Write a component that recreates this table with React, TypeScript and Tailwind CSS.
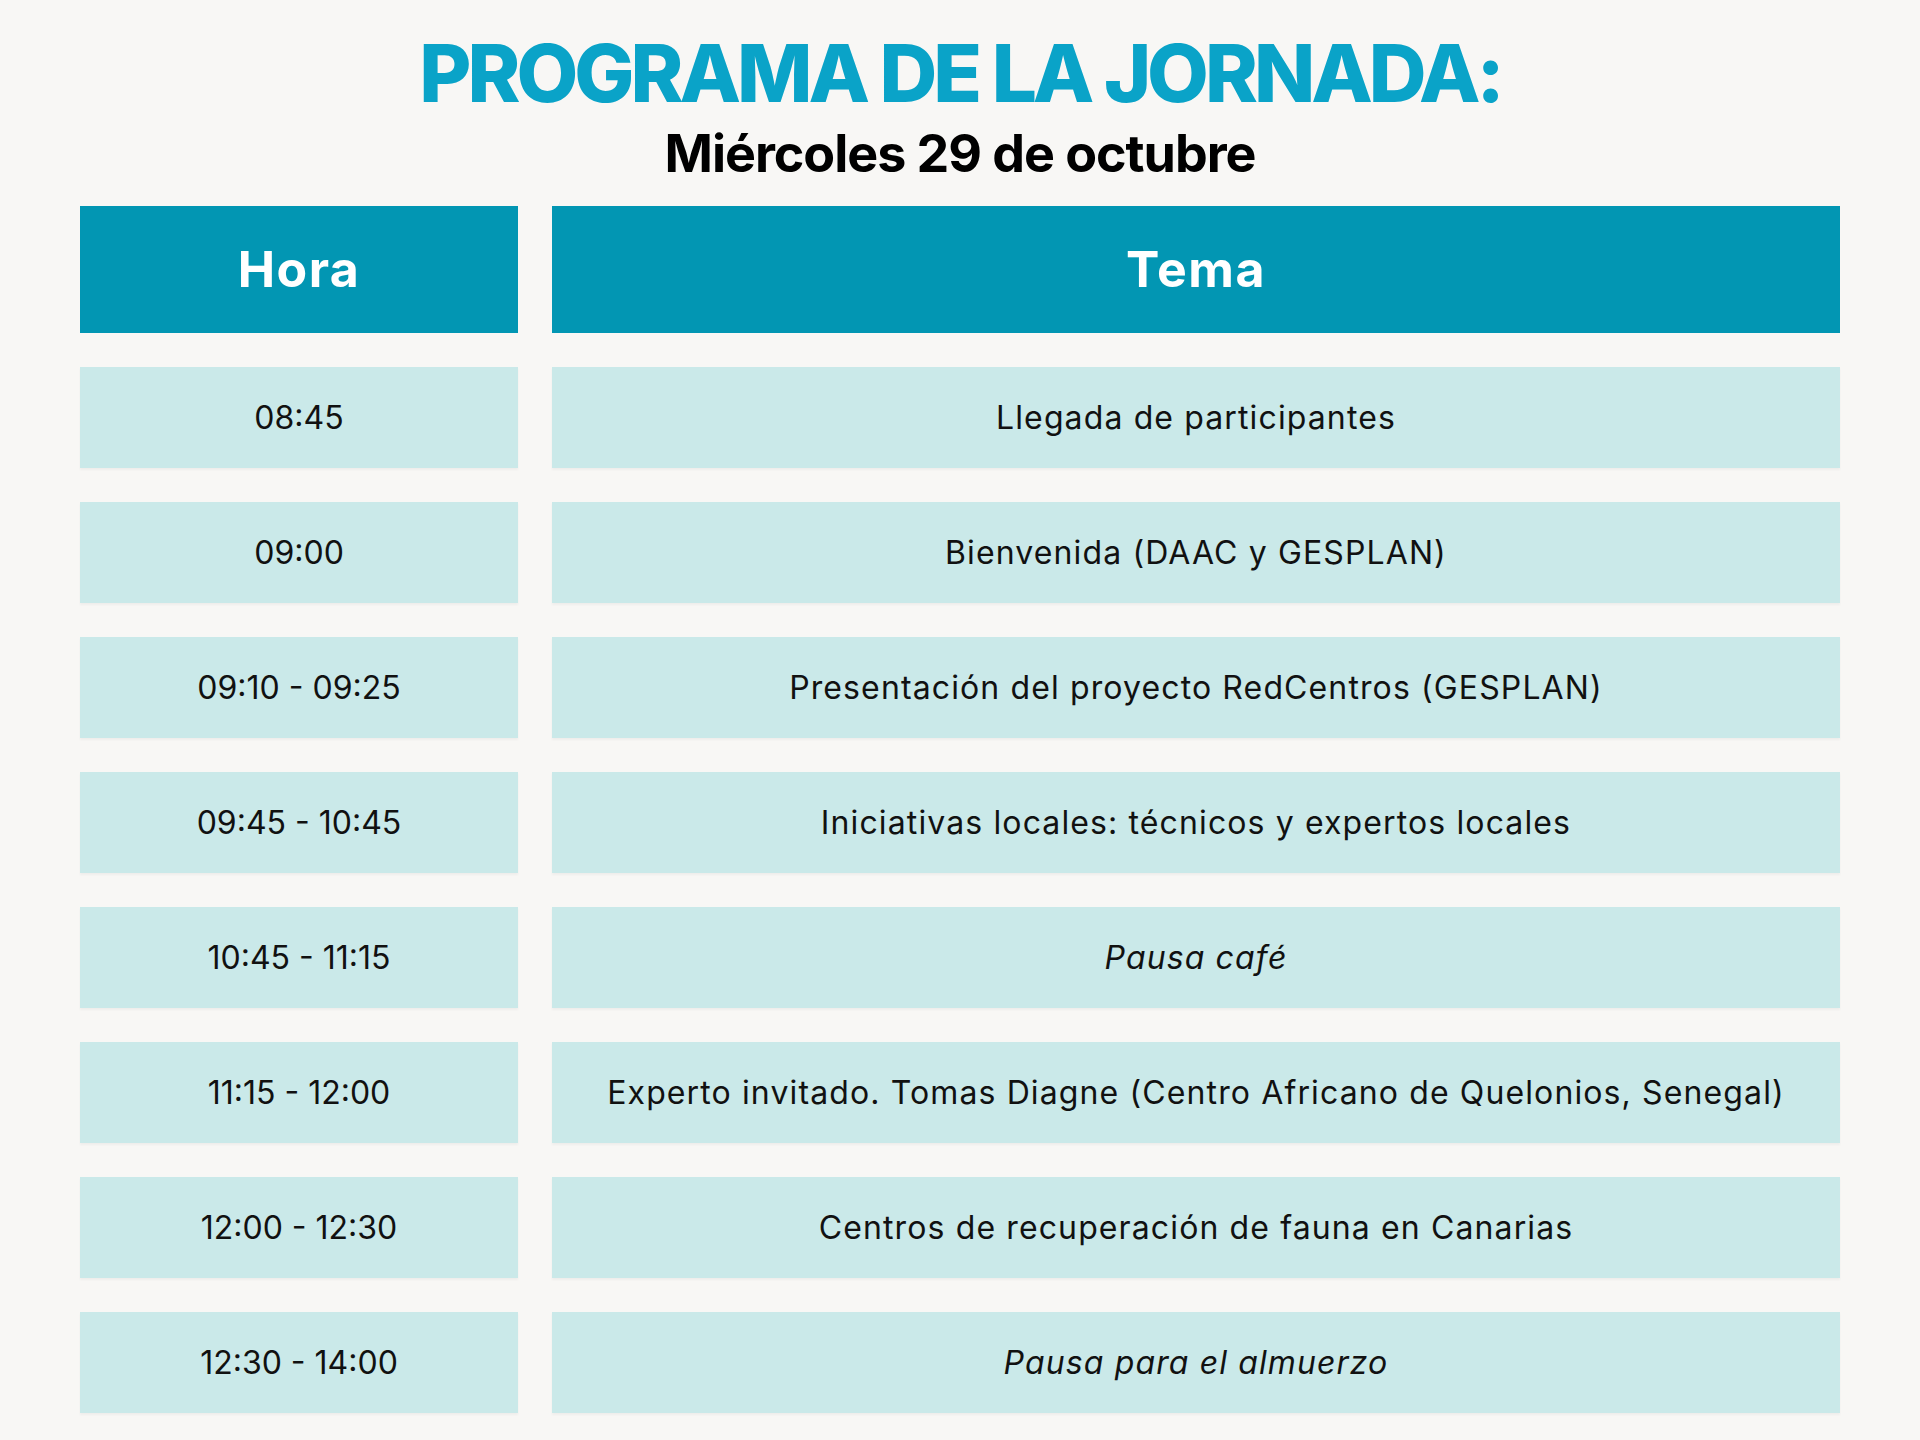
const rows: { hora: string; tema: string; italic?: boolean }[] = [
  { hora: "08:45", tema: "Llegada de participantes" },
  { hora: "09:00", tema: "Bienvenida (DAAC y GESPLAN)" },
  { hora: "09:10 - 09:25", tema: "Presentación del proyecto RedCentros (GESPLAN)" },
  { hora: "09:45 - 10:45", tema: "Iniciativas locales: técnicos y expertos locales" },
  { hora: "10:45 - 11:15", tema: "Pausa café", italic: true },
  { hora: "11:15 - 12:00", tema: "Experto invitado. Tomas Diagne (Centro Africano de Quelonios, Senegal)" },
  { hora: "12:00 - 12:30", tema: "Centros de recuperación de fauna en Canarias" },
  { hora: "12:30 - 14:00", tema: "Pausa para el almuerzo", italic: true },
];

export default function App() {
  return (
    <div className="w-[1920px] h-[1440px] bg-[#f8f7f5] font-['Inter',sans-serif] text-[#111]">
      <div className="flex flex-col items-center pt-[27px]">
        <h1 className="text-[80px] leading-[92px] font-extrabold tracking-[-0.05em] text-[#0aa3c8]">
          PROGRAMA DE LA JORNADA:
        </h1>
        <h2 className="mt-[5px] text-[52px] leading-[60px] font-bold tracking-[-0.02em] text-black">
          Miércoles 29 de octubre
        </h2>
      </div>
      <div className="mt-[22px] px-[80px] grid grid-cols-[438px_1fr] gap-x-[34px] gap-y-[34px]">
        <div className="h-[127px] bg-[#0296b3] flex items-center justify-center text-white text-[50px] font-bold tracking-[0.03em]">
          Hora
        </div>
        <div className="h-[127px] bg-[#0296b3] flex items-center justify-center text-white text-[50px] font-bold tracking-[0.03em]">
          Tema
        </div>
        {rows.map((r) => (
          <>
            <div key={r.hora + "h"} className="h-[101px] bg-[#cae9e9] flex items-center justify-center text-[32px] shadow-[0_2px_2px_rgba(0,0,0,0.04)]">
              {r.hora}
            </div>
            <div key={r.hora + "t"} className={"h-[101px] bg-[#cae9e9] flex items-center justify-center text-[32px] tracking-[0.035em] shadow-[0_2px_2px_rgba(0,0,0,0.04)]" + (r.italic ? " italic" : "")}>
              {r.tema}
            </div>
          </>
        ))}
      </div>
    </div>
  );
}
